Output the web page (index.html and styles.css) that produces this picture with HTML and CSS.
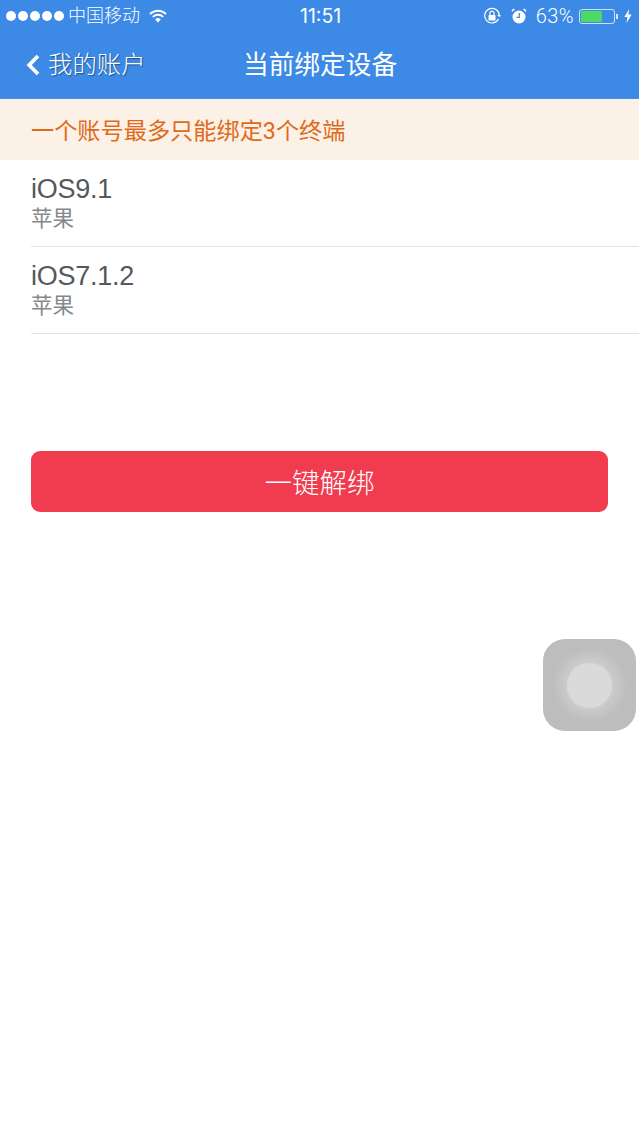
FILE: index.html
```html
<!DOCTYPE html>
<html lang="zh-CN">
<head>
<meta charset="utf-8">
<title>当前绑定设备</title>
<link rel="stylesheet" href="styles.css">
</head>
<body>
<header class="top">
  <div class="status">
    <div class="status-left">
      <span class="dots"><i></i><i></i><i></i><i></i><i></i></span>
      <span class="carrier">中国移动</span>
      <svg class="wifi" viewBox="0 0 18 14" width="18" height="14"><path d="M1 5 A11.5 11.5 0 0 1 17 5" fill="none" stroke="#fff" stroke-width="1.9"/><path d="M3.8 7.9 A7.5 7.5 0 0 1 14.2 7.9" fill="none" stroke="#fff" stroke-width="1.9"/><path d="M9 13.5 L6.2 10.4 A4 4 0 0 1 11.8 10.4 Z" fill="#fff"/></svg>
    </div>
    <div class="time">11:51</div>
    <div class="status-right">
      <svg class="lock" viewBox="0 0 18 18" width="18" height="18"><path d="M15.5 12 A7.3 7.3 0 1 1 16.3 8.5" fill="none" stroke="#fff" stroke-width="1.2"/><path d="M14.2 8 L16.4 10.2 L18 8 Z" fill="#fff"/><rect x="5.5" y="8" width="7" height="5.5" rx="0.8" fill="#fff"/><path d="M7 8 V6.2 A2 2 0 0 1 11 6.2 V8" fill="none" stroke="#fff" stroke-width="1.2"/></svg>
      <svg class="alarm" viewBox="0 0 16 16" width="16" height="16"><circle cx="8" cy="9" r="6.5" fill="#fff"/><path d="M1 4 L4 1.2 L2.6 0.6 L0.6 2.4 Z M15 4 L12 1.2 L13.4 0.6 L15.4 2.4 Z" fill="#fff"/><path d="M8.3 5 V9.3 H5.5" fill="none" stroke="#3c89e6" stroke-width="1.2"/></svg>
      <span class="percent">63%</span>
      <span class="battery"><span class="battery-fill"></span></span>
      <span class="nub"></span>
      <svg class="bolt" viewBox="0 0 8 14" width="8" height="14"><path d="M5.2 0 L0.4 8 H3.4 L2.6 14 L7.6 5.6 H4.4 Z" fill="#fff"/></svg>
    </div>
  </div>
  <nav class="nav">
    <div class="back">
      <svg class="chevron" viewBox="0 0 14 22" width="14" height="22"><path d="M12 2 L3.2 11 L12 20" fill="none" stroke="#fff" stroke-width="3.8"/></svg>
      <span class="back-label">我的账户</span>
    </div>
    <div class="title">当前绑定设备</div>
  </nav>
</header>
<div class="notice">一个账号最多只能绑定3个终端</div>
<ul class="devices">
  <li class="device"><div class="device-name">iOS9.1</div><div class="device-brand">苹果</div></li>
  <li class="device"><div class="device-name">iOS7.1.2</div><div class="device-brand">苹果</div></li>
</ul>
<div class="action"><button class="unbind" type="button">一键解绑</button></div>
<div class="assistive"><span class="glow"><span class="knob"></span></span></div>
</body>
</html>
```
FILE: styles.css
```css
* { box-sizing: border-box; }
html, body { margin: 0; padding: 0; }
body {
  width: 639px;
  height: 1136px;
  overflow: hidden;
  background: #fff;
  position: relative;
  font-family: "Liberation Sans", "Noto Sans CJK SC", sans-serif;
}
.top { background: #3c89e6; height: 99px; border-bottom: 1px solid #4a8fe0; }
.status { height: 32px; display: flex; align-items: center; position: relative; color: #fff; }
.status-left { display: flex; align-items: center; padding-left: 6px; }
.dots { display: flex; gap: 2px; margin-right: 4px; }
.dots i { width: 10px; height: 10px; border-radius: 50%; background: #fff; display: block; }
.carrier { font-size: 18px; font-weight: 300; line-height: 32px; }
.wifi { margin-left: 9px; }
.time { position: absolute; left: 300px; top: 0; font-size: 19.5px; line-height: 32px; font-family: "Inter", sans-serif; font-weight: 400; }
.status-right { margin-left: auto; display: flex; align-items: center; padding-right: 7px; }
.lock { margin-right: 10px; }
.alarm { margin-right: 9px; }
.percent { font-size: 20px; font-family: "Roboto", sans-serif; font-weight: 300; margin-right: 5px; letter-spacing: .4px; }
.battery { width: 36px; height: 15px; border: 1px solid #cfe0f5; border-radius: 3px; padding: 1px; display: block; }
.battery-fill { display: block; width: 21px; height: 100%; background: #4cd964; border-radius: 1px; }
.nub { width: 2px; height: 5px; background: #dbe7f7; margin-left: 1px; margin-right: 6px; }
.nav { height: 66px; position: relative; display: flex; align-items: center; color: #fff; }
.back { display: flex; align-items: center; padding-left: 26px; }
.chevron { margin-right: 8px; }
.back-label { font-size: 24.4px; line-height: 62px; height: 62px; font-weight: 300; text-shadow: 1px 1px 1px #21518c; }
.title { position: absolute; left: 243px; top: 0; line-height: 66px; font-size: 25.7px; }
.notice { height: 61px; background: #fcf1e6; color: #e06a1a; font-family: "Roboto", "Noto Sans CJK SC", sans-serif; font-size: 23.2px; line-height: 64px; padding-left: 31px; white-space: nowrap; }
.devices { list-style: none; margin: 0; padding: 0 0 0 31px; }
.device { height: 87px; border-bottom: 1px solid #e3e3e3; padding-top: 12px; }
.device-name { font-size: 27px; line-height: 34px; letter-spacing: -.25px; color: #55585c; }
.device-brand { font-size: 21.5px; line-height: 26px; color: #85888c; }
.action { padding: 117px 31px 0; }
.unbind { display: block; width: 577px; height: 61px; border: 0; border-radius: 9px; background: #f13c4f; color: #fff; font-family: inherit; font-size: 27.5px; font-weight: 300; padding: 0 0 2px; }
.assistive { position: absolute; left: 543px; top: 639px; width: 93px; height: 92px; border-radius: 22px; background: #bdbdbd; display: flex; align-items: center; justify-content: center; }
.glow { width: 76px; height: 76px; border-radius: 50%; background: radial-gradient(circle closest-side, #cdcdcd 0%, #cbcbcb 60%, #c5c5c5 78%, #bfbfbf 92%, #bdbdbd 100%); display: flex; align-items: center; justify-content: center; }
.knob { width: 45px; height: 45px; border-radius: 50%; background: #dadada; display: block; box-shadow: 0 0 2px #d4d4d4; }
```
